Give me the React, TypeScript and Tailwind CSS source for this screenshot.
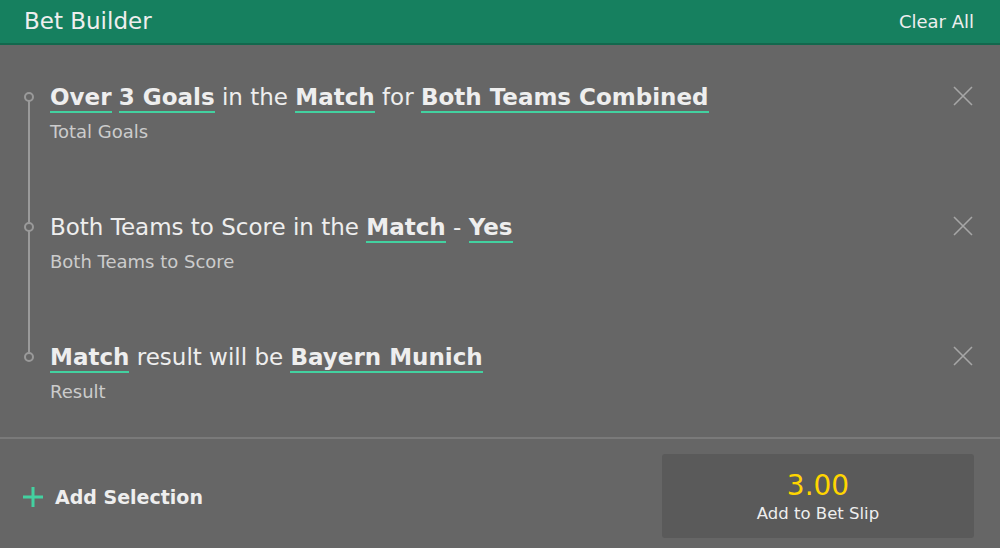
import React from "react";

type Part = { text: string; bold?: boolean };

const selections: { parts: Part[]; market: string }[] = [
  {
    parts: [
      { text: "Over", bold: true },
      { text: " " },
      { text: "3 Goals", bold: true },
      { text: " in the " },
      { text: "Match", bold: true },
      { text: " for " },
      { text: "Both Teams Combined", bold: true },
    ],
    market: "Total Goals",
  },
  {
    parts: [
      { text: "Both Teams to Score in the " },
      { text: "Match", bold: true },
      { text: " - " },
      { text: "Yes", bold: true },
    ],
    market: "Both Teams to Score",
  },
  {
    parts: [
      { text: "Match", bold: true },
      { text: " result will be " },
      { text: "Bayern Munich", bold: true },
    ],
    market: "Result",
  },
];

const CloseIcon = () => (
  <svg width="22" height="22" viewBox="0 0 22 22" className="shrink-0">
    <path d="M2 2 L20 20 M20 2 L2 20" stroke="#a6a6a6" strokeWidth="1.6" fill="none" />
  </svg>
);

const App: React.FC = () => {
  return (
    <div
      className="w-[1000px] h-[548px] bg-[#666666] flex flex-col overflow-hidden"
      style={{ fontFamily: '"DejaVu Sans", Verdana, sans-serif' }}
    >
      {/* Header */}
      <div className="h-[45px] bg-[#16805f] border-b-2 border-[#12684d] flex items-center justify-between pl-6 pr-[26px] shrink-0">
        <span className="text-[23px] text-[#eeeeee]">Bet Builder</span>
        <span className="text-[18px] text-[#eeeeee]">Clear All</span>
      </div>

      {/* Selections */}
      <div className="relative flex flex-col gap-[63px] pt-[32px] h-[392px] shrink-0">
        <div className="absolute left-[28px] top-[51px] w-[2px] h-[260px] bg-[#9a9a9a]" />
        {selections.map((sel, i) => (
          <div key={i} className="relative flex items-start pl-[50px] pr-[26px] shrink-0">
            <div className="absolute left-[24px] top-[15px] w-[10px] h-[10px] rounded-full border-2 border-[#9a9a9a] bg-[#666666]" />
            <div className="flex-1">
              <div className="text-[23px] leading-[40px] text-[#eeeeee] whitespace-pre">
                {sel.parts.map((p, j) =>
                  p.bold ? (
                    <span key={j} className="font-bold border-b-2 border-[#43d1a0] pb-[1px]">
                      {p.text}
                    </span>
                  ) : (
                    <span key={j}>{p.text}</span>
                  )
                )}
              </div>
              <div className="text-[18px] leading-[24px] text-[#cccccc] mt-[3px]">{sel.market}</div>
            </div>
            <div className="pt-[8px]">
              <CloseIcon />
            </div>
          </div>
        ))}
      </div>

      {/* Footer */}
      <div className="border-t-2 border-[#7a7a7a] flex justify-between pl-[23px] pr-[26px] pt-[15px] flex-1 items-start">
        <div className="flex items-center gap-[12px] mt-[29px]">
          <svg width="20" height="20" viewBox="0 0 20 20">
            <path d="M10 0 V20 M0 10 H20" stroke="#43d1a0" strokeWidth="3" />
          </svg>
          <span className="text-[19px] font-bold text-[#eeeeee]">Add Selection</span>
        </div>
        <div className="w-[312px] h-[84px] bg-[#5a5a5a] rounded-[3px] flex flex-col items-center justify-center pt-[2px]">
          <span className="text-[28px] leading-[34px] text-[#ffd500]">3.00</span>
          <span className="text-[16.5px] leading-[22px] text-[#eeeeee]">Add to Bet Slip</span>
        </div>
      </div>
    </div>
  );
};

export default App;
